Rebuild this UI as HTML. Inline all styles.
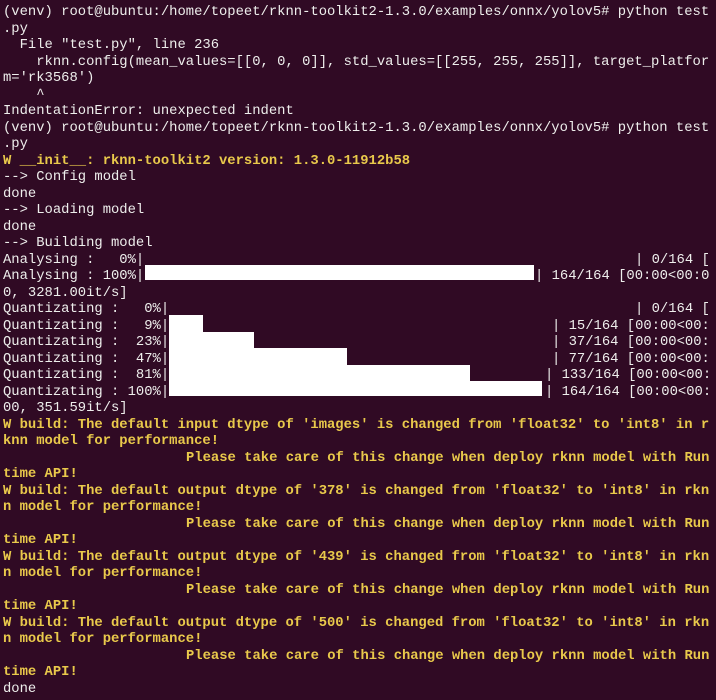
<!DOCTYPE html>
<html><head><meta charset="utf-8"><style>
html,body{margin:0;padding:0;background:#300a24;}
body{width:716px;height:696px;overflow:hidden;position:relative;font-family:"Liberation Mono","DejaVu Sans Mono",monospace;font-size:13.85px;color:#eeeeec;}
#w{position:absolute;left:0;top:4px;width:716px;height:696px;}
.l{position:absolute;left:3px;height:16.5px;line-height:16.5px;white-space:pre;}
.y{color:#e9c94b;font-weight:bold;}
.p{left:186px;}
.b{position:absolute;background:#fff;}
</style></head><body><div id="w">
<div class="l" style="top:0px">(venv) root@ubuntu:/home/topeet/rknn-toolkit2-1.3.0/examples/onnx/yolov5# python test</div>
<div class="l" style="top:16.5px">.py</div>
<div class="l" style="top:33px">  File "test.py", line 236</div>
<div class="l" style="top:49.5px">    rknn.config(mean_values=[[0, 0, 0]], std_values=[[255, 255, 255]], target_platfor</div>
<div class="l" style="top:66px">m='rk3568')</div>
<div class="l" style="top:82.5px">    ^</div>
<div class="l" style="top:99px">IndentationError: unexpected indent</div>
<div class="l" style="top:115.5px">(venv) root@ubuntu:/home/topeet/rknn-toolkit2-1.3.0/examples/onnx/yolov5# python test</div>
<div class="l" style="top:132px">.py</div>
<div class="l y" style="top:148.5px">W __init__: rknn-toolkit2 version: 1.3.0-11912b58</div>
<div class="l" style="top:165px">--&gt; Config model</div>
<div class="l" style="top:181.5px">done</div>
<div class="l" style="top:198px">--&gt; Loading model</div>
<div class="l" style="top:214.5px">done</div>
<div class="l" style="top:231px">--&gt; Building model</div>

<div class="l" style="top:247.5px">Analysing :   0%|</div>
<div class="l" style="top:247.5px;left:635px">| 0/164 [</div>
<div class="l" style="top:264px">Analysing : 100%|</div>
<div class="b" style="top:261px;left:145px;width:389px;height:15px"></div>
<div class="l" style="top:264px;left:535px">| 164/164 [00:00&lt;00:0</div>
<div class="l" style="top:280.5px">0, 3281.00it/s]</div>

<div class="l" style="top:297px">Quantizating :   0%|</div>
<div class="l" style="top:297px;left:635px">| 0/164 [</div>
<div class="l" style="top:313.5px">Quantizating :   9%|</div>
<div class="l" style="top:313.5px;left:552px">| 15/164 [00:00&lt;00:</div>
<div class="l" style="top:330px">Quantizating :  23%|</div>
<div class="l" style="top:330px;left:552px">| 37/164 [00:00&lt;00:</div>
<div class="l" style="top:346.5px">Quantizating :  47%|</div>
<div class="l" style="top:346.5px;left:552px">| 77/164 [00:00&lt;00:</div>
<div class="l" style="top:363px">Quantizating :  81%|</div>
<div class="l" style="top:363px;left:545px">| 133/164 [00:00&lt;00:</div>
<div class="l" style="top:379.5px">Quantizating : 100%|</div>
<div class="l" style="top:379.5px;left:545px">| 164/164 [00:00&lt;00:</div>
<div class="b" style="top:311px;left:169px;width:34px;height:16.5px"></div>
<div class="b" style="top:327.5px;left:169px;width:85px;height:16.5px"></div>
<div class="b" style="top:344px;left:169px;width:178px;height:16.5px"></div>
<div class="b" style="top:360.5px;left:169px;width:301px;height:16.5px"></div>
<div class="b" style="top:377px;left:169px;width:373px;height:15px"></div>
<div class="l" style="top:396px">00, 351.59it/s]</div>

<div class="l y" style="top:412.5px">W build: The default input dtype of 'images' is changed from 'float32' to 'int8' in r</div>
<div class="l y" style="top:429px">knn model for performance!</div>
<div class="l y p" style="top:445.5px">Please take care of this change when deploy rknn model with Run</div>
<div class="l y" style="top:462px">time API!</div>
<div class="l y" style="top:478.5px">W build: The default output dtype of '378' is changed from 'float32' to 'int8' in rkn</div>
<div class="l y" style="top:495px">n model for performance!</div>
<div class="l y p" style="top:511.5px">Please take care of this change when deploy rknn model with Run</div>
<div class="l y" style="top:528px">time API!</div>
<div class="l y" style="top:544.5px">W build: The default output dtype of '439' is changed from 'float32' to 'int8' in rkn</div>
<div class="l y" style="top:561px">n model for performance!</div>
<div class="l y p" style="top:577.5px">Please take care of this change when deploy rknn model with Run</div>
<div class="l y" style="top:594px">time API!</div>
<div class="l y" style="top:610.5px">W build: The default output dtype of '500' is changed from 'float32' to 'int8' in rkn</div>
<div class="l y" style="top:627px">n model for performance!</div>
<div class="l y p" style="top:643.5px">Please take care of this change when deploy rknn model with Run</div>
<div class="l y" style="top:660px">time API!</div>
<div class="l" style="top:676.5px">done</div>
</div></body></html>
